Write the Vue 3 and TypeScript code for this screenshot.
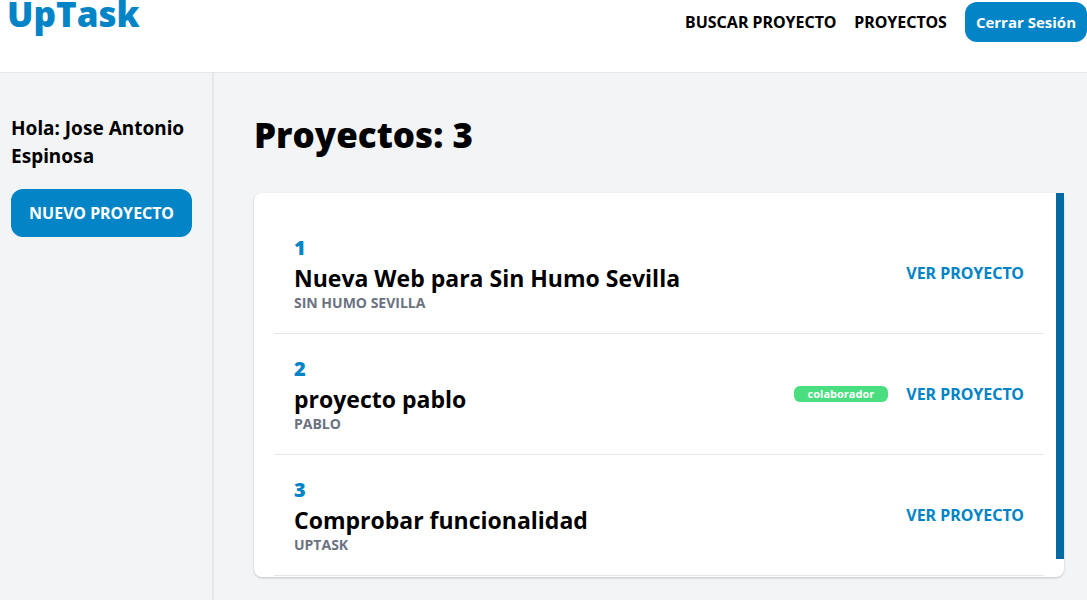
<script setup lang="ts">
import { computed, onMounted, ref } from 'vue'

interface Project {
  id: number
  name: string
  client: string
  collaborator: boolean
}

const userName = 'Jose Antonio Espinosa'
const projects: Project[] = [
  { id: 1, name: 'Nueva Web para Sin Humo Sevilla', client: 'Sin Humo Sevilla', collaborator: false },
  { id: 2, name: 'proyecto pablo', client: 'Pablo', collaborator: true },
  { id: 3, name: 'Comprobar funcionalidad', client: 'UpTask', collaborator: false },
]

const list = ref<HTMLElement | null>(null)
const visible = ref(1)
const total = ref(1)
const offset = ref(0)

// Keeps the thumb in step with the scrolled list
function measure(): void {
  if (!list.value) return
  visible.value = list.value.clientHeight
  total.value = list.value.scrollHeight
  offset.value = list.value.scrollTop
}

const thumbStyle = computed(() => ({
  height: `${(visible.value / total.value) * 100}%`,
  top: `${(offset.value / total.value) * 100}%`,
}))

onMounted(measure)
</script>

<template>
  <div class="page">
    <header class="header">
      <h2 class="logo">UpTask</h2>
      <nav class="nav">
        <button type="button" class="nav-item">Buscar Proyecto</button>
        <a href="#proyectos" class="nav-item">Proyectos</a>
        <button type="button" class="logout">Cerrar Sesión</button>
      </nav>
    </header>

    <div class="body">
      <aside class="sidebar">
        <p class="greeting">Hola: {{ userName }}</p>
        <a href="#crear" class="new-project">Nuevo Proyecto</a>
      </aside>

      <main id="proyectos" class="main">
        <h1 class="title">Proyectos: {{ projects.length }}</h1>
        <div class="card">
          <div ref="list" class="list" @scroll="measure">
            <article v-for="project in projects" :key="project.id" class="row">
              <div class="info">
                <p class="number">{{ project.id }}</p>
                <h3 class="name">{{ project.name }}</h3>
                <p class="client">{{ project.client }}</p>
              </div>
              <div class="actions">
                <span v-if="project.collaborator" class="badge">colaborador</span>
                <a :href="`#proyecto-${project.id}`" class="view">Ver Proyecto</a>
              </div>
            </article>
          </div>
          <div class="thumb" :style="thumbStyle" aria-hidden="true"></div>
        </div>
      </main>
    </div>
  </div>
</template>

<style>
body {
  background: #f3f4f6;
}
</style>

<style scoped>
.page {
  display: flex;
  flex-direction: column;
  min-height: 100vh;
  color: #000;
  font-family: 'Segoe UI', 'Open Sans', 'Noto Sans', sans-serif;
  font-size: 15px;
  line-height: 24px;
}

h1,
h2,
h3,
p {
  margin: 0;
}

a {
  color: inherit;
  text-decoration: none;
}

button {
  padding: 0;
  border: 0;
  background: none;
  color: inherit;
  font: inherit;
  cursor: pointer;
}

.header {
  display: flex;
  justify-content: space-between;
  align-items: flex-start;
  padding: 0 0 30px 7px;
  background: #fff;
  border-bottom: 1px solid #e5e7eb;
}

.logo {
  color: #0284c7;
  font-size: 35px;
  line-height: 28px;
  font-weight: 800;
}

.nav {
  display: flex;
  align-items: center;
  gap: 18px;
  padding-top: 2px;
}

.nav-item,
.new-project,
.view {
  font-family: 'Segoe UI', 'Noto Sans', sans-serif;
  font-size: 16px;
  font-weight: 700;
  text-transform: uppercase;
}

.logout {
  padding: 8px 11px;
  border-radius: 12px;
  background: #0284c7;
  color: #fff;
  font-weight: 700;
}

.body {
  display: flex;
  flex: 1;
}

.sidebar {
  flex: 0 0 181px;
  padding: 41px 20px 20px 11px;
  border-right: 2px solid #e5e7eb;
}

.greeting {
  font-family: 'Segoe UI', 'Noto Sans', sans-serif;
  font-size: 19px;
  line-height: 28px;
  font-weight: 700;
}

.new-project {
  display: block;
  margin-top: 19px;
  padding: 12px 0;
  border-radius: 12px;
  background: #0284c7;
  color: #fff;
  text-align: center;
}

.main {
  flex: 1;
  min-width: 0;
  padding: 40px 23px 23px 40px;
}

.title {
  font-size: 35px;
  line-height: 44px;
  font-weight: 800;
}

.card {
  position: relative;
  margin-top: 36px;
  border-radius: 8px;
  background: #fff;
  box-shadow: 0 1px 3px rgb(0 0 0 / 10%), 0 1px 2px rgb(0 0 0 / 10%);
}

.list {
  box-sizing: border-box;
  max-height: 384px;
  padding: 20px;
  overflow-y: auto;
  scrollbar-width: none;
}

.thumb {
  position: absolute;
  top: 0;
  right: 0;
  width: 8px;
  background: #0369a1;
}

.row {
  display: flex;
  justify-content: space-between;
  align-items: center;
  padding: 21px 20px;
  border-bottom: 1px solid #e5e7eb;
}

.number {
  color: #0284c7;
  font-size: 20px;
  line-height: 28px;
  font-weight: 800;
}

.name {
  font-size: 23px;
  line-height: 32px;
  font-weight: 700;
}

.client {
  color: #6b7280;
  font-size: 14px;
  line-height: 18px;
  font-weight: 700;
  text-transform: uppercase;
}

.actions {
  display: flex;
  align-items: center;
  gap: 18px;
}

.badge {
  padding: 0 14px;
  border-radius: 6px;
  background: #4ade80;
  color: #fff;
  font-size: 11px;
  line-height: 16px;
  font-weight: 700;
}

.view {
  color: #0284c7;
}
</style>
